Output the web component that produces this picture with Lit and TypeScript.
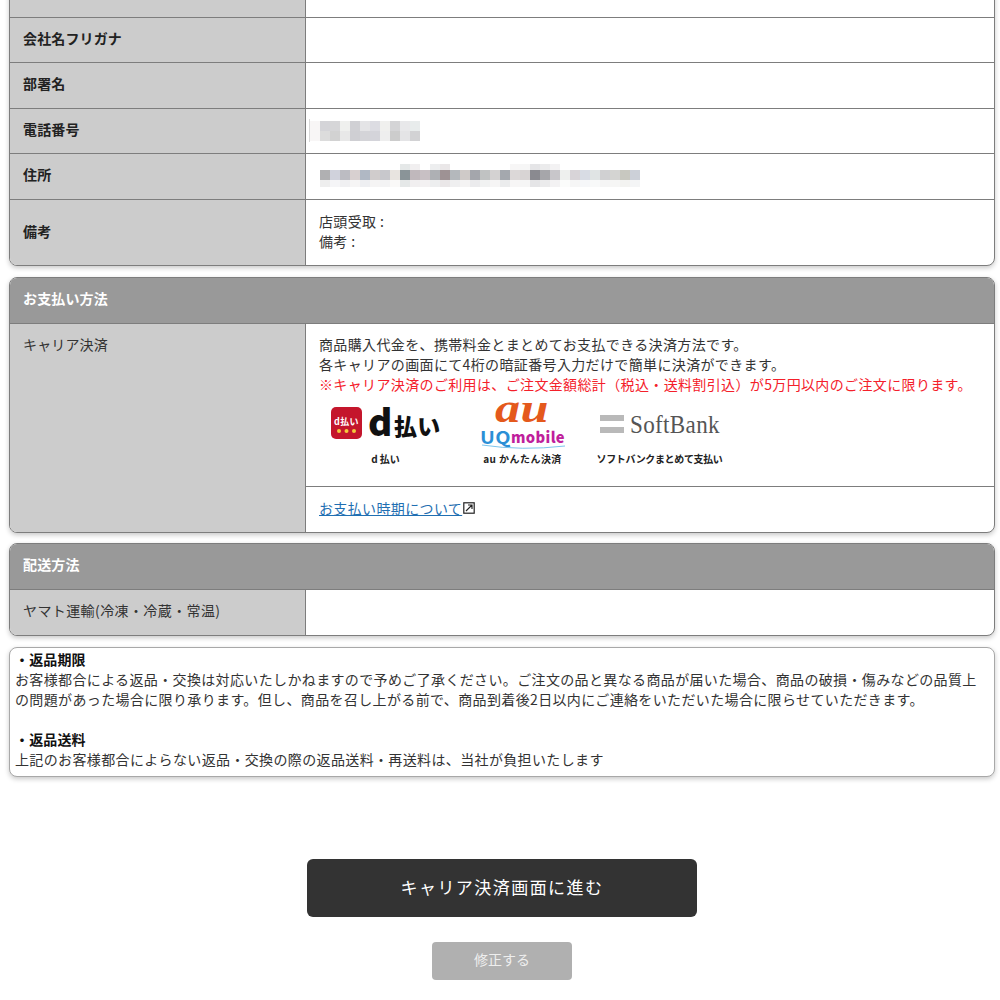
import { LitElement, html, css, svg } from "lit";
import { customElement } from "lit/decorators.js";

const PHONE_TOP = ["#d4d4d8","#d6d6d8","#eff0ee","#d0d0d4","#e4e4e6","#dcdce2","#f0f0ee","#d4d4d6","#e8e8ea","#e8ecec"];
const PHONE_BOTTOM = ["#dcdcdc","#d2d2d2","#e8e8e8","#cfcfd3","#d4d4d8","#d4d4da","#eeeeee","#cccccc","#e4e4e6","#d2d2d4"];
const ADDRESS = ["#b0b0b2","#d0d2dc","#bcbcc2","#d8d0d0","#b0b8c4","#d0cccc","#c8c8cc","#e8e4e0","#8a9498","#c0b8bc","#c8c0c4","#aeb0b4","#9e9294","#b4b8bc","#cfcac8","#a4a6ac","#c0c2c2","#d4d2d2","#a4a8ae","#dcd8d8","#d8d4d4","#8a8a90","#a6a6aa","#c8c6ca","#eef0ee","#d8d4d8","#d8dce4","#e0e4e4","#d0d0d2","#d4d4d2","#c8c8c0","#ccd0d8"];
const ADDRESS_UPPER = new Set([8, 9, 11, 12, 19, 20, 21, 22, 23]);

@customElement("app-root")
export class AppRoot extends LitElement {
  static styles = css`
    :host {
      display: block;
      height: 1000px;
      overflow: hidden;
      background: #fff;
      font-family: "Noto Sans CJK JP", "Noto Sans", sans-serif;
      font-size: 14px;
      line-height: 20px;
      letter-spacing: 0.36px;
      color: #333;
    }
    .page {
      margin-top: -29px;
      padding: 0 5px 0 9px;
      display: flex;
      flex-direction: column;
      gap: 11px;
    }
    .card {
      border: 1px solid #7d7d7d;
      border-radius: 8px;
      overflow: hidden;
      background: #fff;
      box-shadow: 0 2px 5px rgba(0, 0, 0, 0.22);
    }
    .pay-card { margin-bottom: -0.5px; }
    .row {
      display: grid;
      grid-template-columns: 296px 1fr;
      min-height: 45.5px;
      box-sizing: border-box;
      border-bottom: 1px solid #7d7d7d;
    }
    .row:last-child { border-bottom: none; }
    .label {
      background: #ccc;
      border-right: 1px solid #7d7d7d;
      padding: 0 13px 4px;
      display: flex;
      align-items: center;
      letter-spacing: 0.14px;
    }
    .label.strong { font-weight: 700; color: #222; }
    .label.top { align-items: flex-start; padding-top: 10px; }
    .label.long { letter-spacing: 0.4px; }
    .note-row .label { padding-bottom: 2px; }
    .value {
      padding: 0 13px 3px;
      display: flex;
      flex-direction: column;
      justify-content: center;
      min-width: 0;
    }
    .value.blur { padding: 0; justify-content: center; }
    .note-row { min-height: 65px; }
    .head {
      background: #999;
      color: #fff;
      font-weight: 700;
      height: 40.5px;
      padding: 0 13px 4px;
      display: flex;
      align-items: center;
      border-bottom: 1px solid #7d7d7d;
      letter-spacing: 0.14px;
    }
    .pay-card .head { height: 41px; padding-bottom: 4px; }
    .stack { padding: 0; justify-content: flex-start; }
    .pay-top {
      padding: 10px 13px 0;
      height: 152px;
      border-bottom: 1px solid #7d7d7d;
    }
    .red { color: #f4202a; white-space: nowrap; }
    .logos {
      display: flex;
      gap: 14px;
      padding-left: 5px;
      margin-top: 3px;
    }
    .logo {
      width: 123px;
      display: flex;
      flex-direction: column;
      align-items: center;
    }
    .logo svg { display: block; overflow: visible; }
    .cap {
      font-size: 10px;
      font-weight: 700;
      line-height: 14px;
      white-space: nowrap;
      color: #222;
      letter-spacing: 0;
    }
    .cap.au { letter-spacing: 0.45px; }
    .cap.narrow { letter-spacing: -0.35px; }
    .pay-link {
      height: 45px;
      padding: 0 13px 3px;
      box-sizing: border-box;
      display: flex;
      align-items: center;
    }
    .pay-link a { color: #1f6fb2; text-decoration: underline; }
    .pay-link svg { display: block; margin-left: 1px; }
    .notice {
      padding: 1px 5px 7px;
      color: #333;
      white-space: nowrap;
      border-color: #a8a8a8;
    }
    .notice b { color: #111; font-weight: 700; letter-spacing: 0.14px; }
    .actions {
      display: flex;
      flex-direction: column;
      align-items: center;
      margin-top: 70.5px;
    }
    .primary, .secondary {
      border: none;
      font-family: inherit;
      color: #fff;
      display: block;
      padding: 0 0 3px;
    }
    .primary {
      width: 390px;
      height: 58px;
      border-radius: 6px;
      background: #333;
      font-size: 17px;
      letter-spacing: 1.45px;
    }
    .secondary {
      margin-top: 25px;
      width: 140px;
      height: 38px;
      border-radius: 4px;
      background: #b0b0b0;
      color: #eee;
      font-size: 14px;
      letter-spacing: 0;
    }
    .sans { font-family: "Noto Sans CJK JP", "Noto Sans", sans-serif; }
    .serif { font-family: "Liberation Serif", serif; }
  `;

  private blurPhone() {
    return html`<svg width="130" height="30" viewBox="306 115 130 30">
      <rect x="309" y="118" width="1" height="23" fill="#d8d8d8"></rect>
      <rect x="310" y="120" width="10" height="20" fill="#f8f6f6"></rect>
      ${PHONE_TOP.map((c, i) => svg`<rect x=${320 + i * 10} y="120" width="10" height="10" fill=${c}></rect>`)}
      ${PHONE_BOTTOM.map((c, i) => svg`<rect x=${320 + i * 10} y="130" width="10" height="10" fill=${c}></rect>`)}
    </svg>`;
  }

  private blurAddress() {
    return html`<svg width="350" height="30" viewBox="306 161 350 30">
      ${ADDRESS.map((c, i) => svg`
        ${ADDRESS_UPPER.has(i) ? svg`<rect x=${320 + i * 10} y="164" width="10" height="6" fill=${c} opacity="0.22"></rect>` : ""}
        <rect x=${320 + i * 10} y="170" width="10" height="10" fill=${c}></rect>
        <rect x=${320 + i * 10} y="180" width="10" height="7" fill=${c} opacity="0.22"></rect>`)}
    </svg>`;
  }

  render() {
    return html`
      <div class="page">
        <section class="card">
          <div class="row"><div class="label strong">会社名</div><div class="value"></div></div>
          <div class="row"><div class="label strong">会社名フリガナ</div><div class="value"></div></div>
          <div class="row"><div class="label strong">部署名</div><div class="value"></div></div>
          <div class="row"><div class="label strong">電話番号</div><div class="value blur">${this.blurPhone()}</div></div>
          <div class="row"><div class="label strong">住所</div><div class="value blur">${this.blurAddress()}</div></div>
          <div class="row note-row"><div class="label strong">備考</div><div class="value"><div>店頭受取 :</div><div>備考 :</div></div></div>
        </section>

        <section class="card pay-card">
          <div class="head">お支払い方法</div>
          <div class="row">
            <div class="label top">キャリア決済</div>
            <div class="value stack">
              <div class="pay-top">
                <div>商品購入代金を、携帯料金とまとめてお支払できる決済方法です。</div>
                <div>各キャリアの画面にて4桁の暗証番号入力だけで簡単に決済ができます。</div>
                <div class="red">※キャリア決済のご利用は、ご注文金額総計（税込・送料割引込）が5万円以内のご注文に限ります。</div>
                <div class="logos">
                  <div class="logo">
                    <svg width="123" height="55" viewBox="324 397 123 55">
                      <rect x="331" y="407" width="31" height="32" rx="5" fill="#c4162c"></rect>
                      <text x="346.5" y="425" text-anchor="middle" font-size="9" font-weight="700" fill="#fff" class="sans">d払い</text>
                      <circle cx="339" cy="431" r="2" fill="#f4c93c"></circle>
                      <circle cx="346.5" cy="431" r="2" fill="#f4c93c"></circle>
                      <circle cx="354" cy="431" r="2" fill="#f4c93c"></circle>
                      <text x="368" y="436" font-size="37" font-weight="900" fill="#111" class="sans">d</text>
                      <text x="394" y="435" font-size="23" font-weight="900" fill="#111" class="sans">払い</text>
                    </svg>
                    <div class="cap">d 払い</div>
                  </div>
                  <div class="logo">
                    <svg width="123" height="55" viewBox="461 397 123 55">
                      <text x="522" y="422" text-anchor="middle" font-size="42" font-weight="700" font-style="italic" fill="#e4591c" class="serif" textLength="54" lengthAdjust="spacingAndGlyphs">au</text>
                      <text x="480" y="444" font-size="17" font-weight="700" fill="#2b8fd6" class="sans" textLength="31" lengthAdjust="spacingAndGlyphs">UQ</text>
                      <text x="511" y="443" font-size="15" font-weight="900" fill="#c01f9c" class="sans" textLength="54" lengthAdjust="spacingAndGlyphs">mobile</text>
                      <path d="M482 445 Q 522 451 565 446" fill="none" stroke="#7cc4ec" stroke-width="1"></path>
                    </svg>
                    <div class="cap au">au かんたん決済</div>
                  </div>
                  <div class="logo">
                    <svg width="123" height="55" viewBox="598 397 123 55">
                      <rect x="600" y="415" width="24" height="6" fill="#b9b9b9"></rect>
                      <rect x="600" y="427" width="24" height="6" fill="#b9b9b9"></rect>
                      <text x="630" y="433" font-size="25" fill="#555" class="serif" textLength="90" lengthAdjust="spacingAndGlyphs">SoftBank</text>
                    </svg>
                    <div class="cap narrow">ソフトバンクまとめて支払い</div>
                  </div>
                </div>
              </div>
              <div class="pay-link">
                <a href="#">お支払い時期について</a>
                <svg width="12" height="12" viewBox="0 0 12 12" fill="none" stroke="#222" stroke-width="1.2">
                  <rect x="0.8" y="0.8" width="10.4" height="10.4"></rect>
                  <path d="M3 9 L9 3 M5 3 H9 V7"></path>
                </svg>
              </div>
            </div>
          </div>
        </section>

        <section class="card">
          <div class="head">配送方法</div>
          <div class="row"><div class="label long">ヤマト運輸(冷凍・冷蔵・常温)</div><div class="value"></div></div>
        </section>

        <section class="card notice">
          <b>・返品期限</b><br />
          お客様都合による返品・交換は対応いたしかねますので予めご了承ください。ご注文の品と異なる商品が届いた場合、商品の破損・傷みなどの品質上<br />
          の問題があった場合に限り承ります。但し、商品を召し上がる前で、商品到着後2日以内にご連絡をいただいた場合に限らせていただきます。<br />
          <br />
          <b>・返品送料</b><br />
          上記のお客様都合によらない返品・交換の際の返品送料・再送料は、当社が負担いたします
        </section>

        <div class="actions">
          <button class="primary">キャリア決済画面に進む</button>
          <button class="secondary">修正する</button>
        </div>
      </div>
    `;
  }
}
